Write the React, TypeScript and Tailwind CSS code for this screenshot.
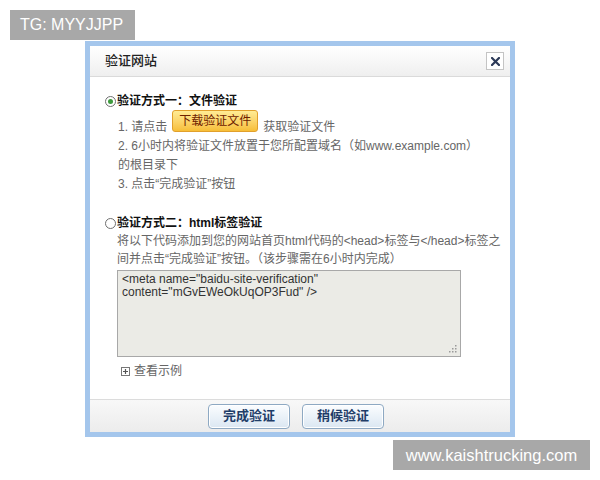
import React from 'react';

const cjk = '"Liberation Sans", "Noto Sans CJK SC", sans-serif';

function Radio({ checked }: { checked?: boolean }) {
  return (
    <span className="w-[11px] h-[11px] rounded-full border border-[#6f6f6f] bg-white flex items-center justify-center shrink-0">
      {checked && <span className="w-[5px] h-[5px] rounded-full bg-[#3d9a3d]" />}
    </span>
  );
}

function FooterButton({ label }: { label: string }) {
  return (
    <button
      type="button"
      className="w-[82px] h-[25px] rounded-[4px] border border-[#8ea9c3] bg-linear-to-b from-[#fbfdff] to-[#dbe7f2] text-[13px] font-bold text-[#1f3d68] shadow-[inset_0_0_0_1px_#ffffff]"
    >
      {label}
    </button>
  );
}

export default function App() {
  return (
    <div className="relative w-[600px] h-[480px] bg-white overflow-hidden" style={{ fontFamily: cjk }}>
      <div className="pt-[41px] pl-[85px]">
        <div className="w-[430px] h-[396px] border-[5px] border-[#a4c6ec] bg-white flex flex-col">
          {/* Header */}
          <div className="h-[31px] flex items-center justify-between pl-[15px] pr-[6px] bg-linear-to-b from-white to-[#efefef] border-b border-[#dadada]">
            <span className="text-[13px] font-medium text-[#222]">验证网站</span>
            <button type="button" className="w-[18px] h-[18px] border border-[#c4c4c4] bg-white flex items-center justify-center">
              <svg width="9" height="9" viewBox="0 0 9 9">
                <path d="M1 1 L8 8 M8 1 L1 8" stroke="#2c3a58" strokeWidth="2.2" strokeLinecap="square" />
              </svg>
            </button>
          </div>

          {/* Body */}
          <div className="flex-1 pl-[15px] pt-[15px] text-[12px] text-[#666]">
            <div className="flex items-center h-[18px] gap-[1px] text-[#111] font-bold">
              <Radio checked />
              <span>验证方式一：文件验证</span>
            </div>
            <div className="pl-[13px]">
              <div className="flex items-start h-[27px]">
                <span className="mt-[8px] leading-[18px]">1. 请点击</span>
                <button
                  type="button"
                  className="ml-[5px] h-[22px] px-[6px] rounded-[3px] border border-[#e1a02c] bg-linear-to-b from-[#ffec94] to-[#f7be36] text-[12px] text-[#6e2100]"
                >
                  下载验证文件
                </button>
                <span className="ml-[5px] mt-[8px] leading-[18px]">获取验证文件</span>
              </div>
              <div className="leading-[19px]">2. 6小时内将验证文件放置于您所配置域名（如www.example.com）</div>
              <div className="leading-[19px]">的根目录下</div>
              <div className="leading-[19px]">3. 点击“完成验证”按钮</div>
            </div>

            <div className="flex items-center h-[18px] gap-[1px] mt-[20px] text-[#111] font-bold">
              <Radio />
              <span>验证方式二：html标签验证</span>
            </div>
            <div className="pl-[12px]">
              <div className="leading-[18px]">将以下代码添加到您的网站首页html代码的&lt;head&gt;标签与&lt;/head&gt;标签之</div>
              <div className="leading-[18px]">间并点击“完成验证”按钮。（该步骤需在6小时内完成）</div>
              <div className="relative mt-[2px] w-[344px] h-[87px] border border-[#a8a8a8] bg-[#ebebe6] px-[4px] pt-[2px] text-[12px] leading-[13px] text-[#333]">
                <div>&lt;meta name="baidu-site-verification"</div>
                <div>content="mGvEWeOkUqOP3Fud" /&gt;</div>
                <svg className="absolute right-[3px] bottom-[3px]" width="9" height="9" viewBox="0 0 9 9">
                  <g fill="#9a9a9a">
                    <rect x="7" y="1" width="1.5" height="1.5" />
                    <rect x="4" y="4" width="1.5" height="1.5" />
                    <rect x="7" y="4" width="1.5" height="1.5" />
                    <rect x="1" y="7" width="1.5" height="1.5" />
                    <rect x="4" y="7" width="1.5" height="1.5" />
                    <rect x="7" y="7" width="1.5" height="1.5" />
                  </g>
                </svg>
              </div>
              <div className="flex items-center gap-[4px] mt-[5px] h-[18px] pl-[4px]">
                <svg width="9" height="9" viewBox="0 0 9 9">
                  <rect x="0.5" y="0.5" width="8" height="8" fill="white" stroke="#777" />
                  <path d="M2 4.5 H7 M4.5 2 V7" stroke="#555" strokeWidth="1.2" />
                </svg>
                <span>查看示例</span>
              </div>
            </div>
          </div>

          {/* Footer */}
          <div className="h-[33px] border-t border-[#dcdcdc] bg-linear-to-b from-[#f8f8f8] to-[#ececec] flex items-center justify-center gap-[12px] pr-[8px]">
            <FooterButton label="完成验证" />
            <FooterButton label="稍候验证" />
          </div>
        </div>
      </div>

      {/* Watermarks */}
      <div className="absolute left-[10px] top-[10px] w-[125px] h-[30px] bg-[#a8a8a8] flex items-center pl-[10px] text-white text-[16px]">
        TG: MYYJJPP
      </div>
      <div className="absolute left-[393px] top-[440px] w-[197px] h-[30px] bg-[#a8a8a8] flex items-center justify-center text-white text-[16.5px]">
        www.kaishtrucking.com
      </div>
    </div>
  );
}
